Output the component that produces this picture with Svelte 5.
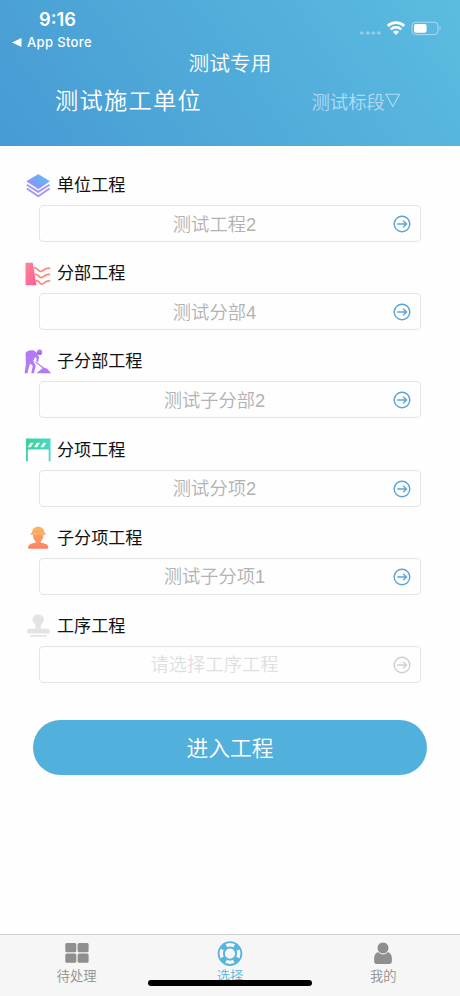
<script lang="ts">
	type Icon = 'layers' | 'dam' | 'digger' | 'barrier' | 'worker' | 'stamp';
	type Field = { icon: Icon; label: string; value?: string; placeholder?: string };

	const fields: Field[] = [
		{ icon: 'layers', label: '单位工程', value: '测试工程2' },
		{ icon: 'dam', label: '分部工程', value: '测试分部4' },
		{ icon: 'digger', label: '子分部工程', value: '测试子分部2' },
		{ icon: 'barrier', label: '分项工程', value: '测试分项2' },
		{ icon: 'worker', label: '子分项工程', value: '测试子分项1' },
		{ icon: 'stamp', label: '工序工程', placeholder: '请选择工序工程' }
	];

	const tabs = [
		{ id: 'todo', label: '待处理' },
		{ id: 'select', label: '选择' },
		{ id: 'mine', label: '我的' }
	];
	let active = $state('select');
</script>

<div class="screen">
	<header>
		<div class="status">
			<div class="clock">
				<span class="time">9:16</span>
				<span class="back">
					<svg width="10" height="9" viewBox="0 0 10 9"><path d="M0 4.5 9.5 0v9z" fill="#fff" /></svg>
					App Store
				</span>
			</div>
			<svg class="signals" width="84" height="16" viewBox="0 0 84 16">
				<g fill="#fff" opacity=".35">
					<rect x="1" y="11.5" width="3.6" height="3" rx="1" />
					<rect x="7" y="11.5" width="3.6" height="3" rx="1" />
					<rect x="12.5" y="11.5" width="3.6" height="3" rx="1" />
					<rect x="18" y="11.5" width="3.6" height="3" rx="1" />
				</g>
				<g fill="none" stroke="#fff" stroke-width="2.6">
					<path d="M28.7 6a12 12 0 0 1 16.6 0" />
					<path d="M31.7 9.4a7.8 7.8 0 0 1 10.6 0" />
				</g>
				<path d="M33.9 11.8a4.6 4.6 0 0 1 6.2 0L37 15z" fill="#fff" />
				<rect x="53" y="2.2" width="26" height="12.4" rx="3.6" fill="none" stroke="#fff" stroke-opacity=".5" />
				<rect x="55" y="4.1" width="12.6" height="8.7" rx="1.8" fill="#fff" />
				<path d="M80.6 6.3q2.2 2 0 4.2z" fill="#fff" opacity=".5" />
			</svg>
		</div>
		<h1>测试专用</h1>
		<div class="unit">
			<span class="company">测试施工单位</span>
			<span class="segment">测试标段<svg width="16" height="15" viewBox="0 0 16 15"><path d="M1 1.2h13.6L7.8 13.4z" fill="none" stroke="currentColor" stroke-width="1.1" /></svg></span>
		</div>
	</header>

	<main>
		{#each fields as field}
			<section>
				<div class="label">
					<svg class="icon" width="28" height="26" viewBox="0 0 28 26">
						{#if field.icon === 'layers'}
							<defs>
								<linearGradient id="g-layers" x1="1" y1="0" x2="0" y2="1">
									<stop offset="0" stop-color="#55c5f4" />
									<stop offset="1" stop-color="#9b82f8" />
								</linearGradient>
							</defs>
							<path d="M14.3 1.5 25.4 8.3 14.3 15.8 3 8.3z" fill="url(#g-layers)" stroke="url(#g-layers)" stroke-width=".8" stroke-linejoin="round" />
							<g fill="none" stroke="#a096f8" stroke-width="1.9" stroke-linejoin="round">
								<path d="m2.8 11.7 11.5 7.2 11.3-7.2" />
								<path d="m2.8 15.5 11.5 7.7 11.3-7.7" />
							</g>
						{:else if field.icon === 'dam'}
							<defs>
								<linearGradient id="g-dam" x1="0" y1="0" x2="1" y2="1">
									<stop offset="0" stop-color="#fb8794" />
									<stop offset="1" stop-color="#fc5c98" />
								</linearGradient>
							</defs>
							<path d="M1.5 1.8h7.2l3.8 22.4h-11z" fill="url(#g-dam)" />
							<g fill="none" stroke="#f78f80" stroke-width="1.9">
								<path d="M9.3 7.2c4-1.8 4.3 3 7.3 3.2s4.5-4.8 9.6-2.9" />
								<path d="M10.4 13.7c4-1.8 3.7 2.7 6.5 2.9s4.5-4.8 9.3-2.9" />
								<path d="M11.4 20c3.6-1.8 3.5 3 6.2 3.1s4.2-4.8 8.6-2.9" />
							</g>
						{:else if field.icon === 'digger'}
							<g fill="#b27af6">
								<circle cx="15.6" cy="3.2" r="2.6" />
								<path d="M1.6 3.9C3.2 1.4 7 .8 10.3 1.8l3.1 2.4 1.6 4-.8 4.8-1.8-.4.2-3.7-1.6-.6-1.6 3.2.9 2.4 1.4 2.8-1.8 7.5H7.2L8.8 17l-2.6-2.6-1.5 4.3-1.2 5.5H.6l1.3-9z" />
								<path d="m12.4 24.2 6.8-5.4 3.7.8 4.3 4.6z" />
							</g>
							<path d="m11.4 12.9 8.6 6.4" stroke="#b080e4" stroke-width="1.2" />
							<path d="m13.4 2.9 4.3 1.9-1.2 1.3-2.9-1.3z" fill="#8f66cc" />
						{:else if field.icon === 'barrier'}
							<defs>
								<linearGradient id="g-barrier" x1="0" x2="1">
									<stop offset="0" stop-color="#3bd09d" />
									<stop offset="1" stop-color="#4bd7c5" />
								</linearGradient>
							</defs>
							<path d="M2 1.6h24.5v22.7h-1.8V12.6H3.8v11.7H2z" fill="url(#g-barrier)" />
							<path d="m3.6 10.2 2.8-4.5h3.2L6.8 10.2zM10 10.2l2.8-4.5H16l-2.8 4.5zM16.4 10.2l2.8-4.5h3.2l-2.8 4.5z" fill="#eefbf5" />
						{:else if field.icon === 'worker'}
							<defs>
								<linearGradient id="g-worker" x1="0" y1="0" x2="0" y2="1">
									<stop offset="0" stop-color="#fbb65c" />
									<stop offset="1" stop-color="#ff8065" />
								</linearGradient>
							</defs>
							<path d="M8 7.7c.2-3.4 2-5.4 4.6-5.8q1.6-1 3.2 0c2.6.4 4.5 2.4 4.6 5.8l1.2.5v1.5h-2.2c0 3.3-1.2 5.6-2.6 6.600v1.500c4 .7 7 1.500 7.500 4 .2 1.200-.4 2-1.500 2H5.500c-1.300 0-1.800-.8-1.400-2 .7-2.400 3.400-3.300 7.400-4v-1.500C10 15.300 9 13 8.900 9.700H6.800V8.200z" fill="url(#g-worker)" />
							<path d="M9.2 8.900h10" stroke="#ffd09a" stroke-width=".7" />
						{:else}
							<g fill="#e4e4e4">
								<path d="M14.2 1.5c3.5 0 5.8 2.3 5.8 5.2 0 2.4-3.2 4.3-3.2 7.5 0 1.3.8 1.6 2.2 1.6h5.2q1.2 0 1.2 1.2v3.5H3.2V17q0-1.2 1.2-1.2h5.2c1.5 0 2.2-.4 2.2-1.6 0-3.2-3.3-5.1-3.3-7.5 0-2.9 2.3-5.2 5.7-5.2z" />
								<rect x="6" y="22" width="17" height="1.8" rx=".8" />
							</g>
						{/if}
					</svg>
					<span>{field.label}</span>
				</div>
				<button class="picker" class:empty={!field.value}>
					<span>{field.value ?? field.placeholder}</span>
					<svg width="18" height="18" viewBox="0 0 18 18" fill="none" stroke="currentColor">
						<circle cx="9" cy="9" r="7.8" stroke-width="1.4" />
						<path d="M4.2 9h9.2M10.2 5.8 13.5 9l-3.3 3.2" stroke-width="1.4" />
					</svg>
				</button>
			</section>
		{/each}
		<button class="enter">进入工程</button>
	</main>

	<nav>
		{#each tabs as tab}
			<button class:active={active === tab.id} onclick={() => (active = tab.id)}>
				<svg width="26" height="26" viewBox="0 0 26 26">
					{#if tab.id === 'todo'}
						<g fill="currentColor">
							<rect x="1.3" y="2" width="11" height="9.2" rx="1.5" />
							<rect x="13.600" y="2" width="11" height="9.2" rx="1.5" />
							<rect x="1.3" y="12.500" width="11" height="9.2" rx="1.5" />
							<rect x="13.600" y="12.500" width="11" height="9.2" rx="1.5" />
						</g>
					{:else if tab.id === 'select'}
						<g fill="none" stroke="currentColor">
							<circle cx="13" cy="12.6" r="11.4" stroke-width="1.8" />
							<circle cx="13" cy="12.6" r="6.1" stroke-width="2" />
							<circle cx="13" cy="12.6" r="9" stroke-width="4.8" stroke-dasharray="5.8 8.337" stroke-dashoffset="-4.17" />
						</g>
					{:else}
						<g fill="currentColor">
							<path d="M8.6 11c-3 .8-4.5 3-4.5 6.500v2.400q0 3.100 3.100 3.100h11.600q3.100 0 3.100-3.100v-2.400c0-3.500-1.500-5.700-4.500-6.500q-4.400 3.400-8.800 0z" />
							<circle cx="13" cy="7" r="6" stroke="#f6f6f6" />
						</g>
					{/if}
				</svg>
				<span>{tab.label}</span>
			</button>
		{/each}
		<div class="home-bar"></div>
	</nav>
</div>

<style>
	:global(body) {
		margin: 0;
		background: #fefefe;
	}
	.screen {
		display: flex;
		flex-direction: column;
		width: 460px;
		height: 996px;
		overflow: hidden;
		background: #fefefe;
		font-family: 'Liberation Sans', 'Noto Sans CJK SC', sans-serif;
	}
	button {
		padding: 0;
		border: 0;
		background: none;
		font: inherit;
	}
	svg {
		display: block;
		flex: none;
	}
	header {
		flex: none;
		box-sizing: border-box;
		height: 146px;
		color: #fff;
		background: linear-gradient(55deg, #479bd4, #51abd9 50%, #5bbce0);
	}
	.status {
		display: flex;
		justify-content: space-between;
		height: 51px;
		padding: 10px 17px 0 12px;
		box-sizing: border-box;
		font-family: Inter, sans-serif;
	}
	.clock {
		display: flex;
		flex-direction: column;
	}
	.time {
		padding-left: 27px;
		font-size: 18.3px;
		font-weight: 600;
		line-height: 19px;
	}
	.back {
		display: flex;
		align-items: center;
		gap: 5px;
		margin-top: 4px;
		font-size: 13px;
		font-weight: 500;
		line-height: 18px;
		letter-spacing: 0.35px;
	}
	.signals {
		margin-top: 10px;
	}
	h1 {
		margin: 0;
		font-size: 20.7px;
		font-weight: 350;
		line-height: 25px;
		text-align: center;
	}
	.unit {
		display: flex;
		align-items: center;
		justify-content: space-between;
		height: 46px;
		padding: 0 59px 0 55px;
	}
	.company {
		font-size: 23.2px;
		font-weight: 350;
		letter-spacing: 1.3px;
	}
	.segment {
		display: flex;
		align-items: center;
		padding-top: 3px;
		color: #b2dbf5;
		font-size: 18.4px;
		font-weight: 350;
	}
	main {
		flex: 1;
		padding: 18px 33px 0;
	}
	section {
		height: 88.2px;
	}
	.label {
		display: flex;
		align-items: center;
		gap: 5px;
		height: 41px;
		margin-left: -9px;
		color: #111;
		font-size: 17.1px;
	}
	.label span {
		margin-top: -2px;
	}
	.icon {
		margin-top: 2px;
	}
	.picker {
		display: flex;
		align-items: center;
		box-sizing: border-box;
		width: 382px;
		height: 37px;
		margin-left: 6px;
		padding: 1px 9px 0 0;
		border: 1px solid #e5e5e5;
		border-radius: 4px;
		color: #5ba5d5;
	}
	.picker span {
		flex: 1;
		margin-left: -4px;
		padding-top: 1px;
		color: #b2b2b2;
		font-size: 18.3px;
		font-weight: 350;
		line-height: 34px;
	}
	.picker.empty {
		color: #cfcfcf;
	}
	.picker.empty span {
		color: #dedede;
	}
	.enter {
		display: block;
		width: 394px;
		height: 55px;
		margin-top: 27px;
		padding-bottom: 2px;
		border-radius: 28px;
		background: #52b0dc;
		color: #fff;
		font-size: 21.8px;
		font-weight: 350;
	}
	nav {
		position: relative;
		display: flex;
		flex: none;
		box-sizing: border-box;
		height: 62px;
		border-top: 1px solid #d2d2d2;
		background: #f6f6f6;
	}
	nav button {
		display: flex;
		flex: 1;
		flex-direction: column;
		align-items: center;
		padding-top: 6px;
		color: #8f8f8f;
		font-size: 13.3px;
		font-weight: 350;
		line-height: 19px;
	}
	nav button.active {
		color: #56b5dd;
	}
	.home-bar {
		position: absolute;
		left: 148px;
		bottom: 10px;
		width: 164px;
		height: 6px;
		border-radius: 3px;
		background: #000;
	}
</style>
